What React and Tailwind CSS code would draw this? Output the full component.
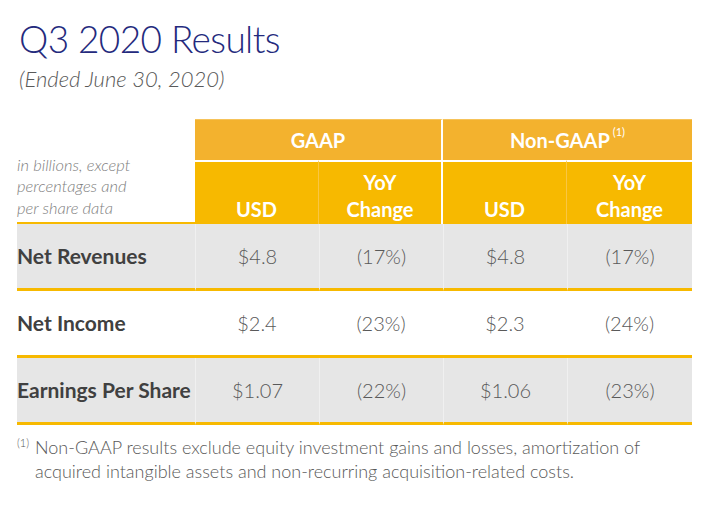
import React from "react";

const rows = [
  { label: "Net Revenues", vals: ["$4.8", "(17%)", "$4.8", "(17%)"], gray: true },
  { label: "Net Income", vals: ["$2.4", "(23%)", "$2.3", "(24%)"], gray: false },
  { label: "Earnings Per Share", vals: ["$1.07", "(22%)", "$1.06", "(23%)"], gray: true },
];

export default function App() {
  return (
    <div className="w-[707px] h-[506px] bg-white overflow-hidden font-['Lato','Open_Sans',sans-serif]">
      {/* titulo */}
      <div className="pl-[19px] pt-[15px]">
        <h1 className="text-[37px] leading-[48px] tracking-[-0.6px] font-light text-[#242a7d]">Q3 2020 Results</h1>
        <p className="text-[22px] leading-[28px] italic font-light text-[#595959] mt-[2px]">
          (Ended June 30, 2020)
        </p>
      </div>

      {/* tabela */}
      <div className="ml-[17px] mt-[26px] grid grid-cols-[178px_124px_124px_124px_125px]">
        <div className="row-span-2 flex items-end pb-[3px] border-b-2 border-[#f7b900] text-[16.5px] leading-[21.5px] italic font-light text-[#7f7f7f]">
          <span>
            in billions, except
            <br />
            percentages and
            <br />
            per share data
          </span>
        </div>
        <div className="col-span-2 h-[41px] bg-[#f3b22e] border-t border-[#f6c35a] border-r-2 border-r-white flex items-center justify-center text-white font-bold text-[20px]">
          GAAP
        </div>
        <div className="col-span-2 h-[41px] bg-[#f3b22e] border-t border-[#f6c35a] flex items-center justify-center text-white font-bold text-[20px]">
          Non-GAAP<sup className="text-[11px] font-normal ml-[3px] -top-[8px]">(1)</sup>
        </div>
        {["USD", "YoY\nChange", "USD", "YoY\nChange"].map((h, i) => (
          <div
            key={i}
            className={`h-[64px] border-t-2 border-white bg-[#f7b900] flex items-end justify-center pb-[1px] text-white font-bold text-[20px] leading-[27px] text-center whitespace-pre-line ${
              i === 1 ? "border-r-2 border-r-white" : ""
            } ${i === 0 || i === 2 ? "border-r border-r-[#f9c643]" : ""}`}
          >
            {h}
          </div>
        ))}

        {rows.map((r) => (
          <React.Fragment key={r.label}>
            <div
              className={`h-[67px] flex items-center border-b-[3px] border-[#f7b900] text-[21px] font-bold text-[#404040] ${
                r.gray ? "bg-[#e6e6e6]" : "bg-white"
              }`}
            >
              {r.label}
            </div>
            {r.vals.map((v, i) => (
              <div
                key={i}
                className={`h-[67px] flex items-center justify-center border-b-[3px] border-b-[#f7b900] text-[20px] font-light text-[#595959] ${
                  r.gray ? "bg-[#e6e6e6] border-l border-l-[#f0f0f0]" : "bg-white"
                }`}
              >
                {v}
              </div>
            ))}
          </React.Fragment>
        ))}
      </div>

      {/* nota de rodapé */}
      <div className="ml-[17px] mt-[10px] flex text-[18px] leading-[24px] font-light text-[#595959]">
        <span className="text-[11px] leading-[16px] w-[18px] shrink-0">(1)</span>
        <p>
          Non-GAAP results exclude equity investment gains and losses, amortization of acquired intangible assets
          and non-recurring acquisition-related costs.
        </p>
      </div>
    </div>
  );
}
